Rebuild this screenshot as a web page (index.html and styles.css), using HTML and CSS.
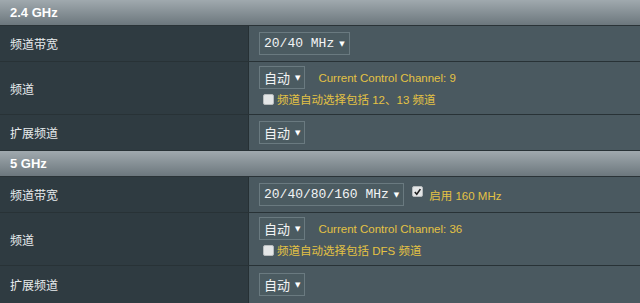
FILE: index.html
```html
<!DOCTYPE html>
<html>
<head>
<meta charset="utf-8">
<link rel="stylesheet" href="styles.css">
</head>
<body>
<div class="panel">
  <div class="hdr">2.4 GHz</div>
  <div class="row">
    <div class="lbl">频道带宽</div>
    <div class="val"><span class="sel mono">20/40 MHz<i class="arr">▼</i></span></div>
  </div>
  <div class="row tall">
    <div class="lbl">频道</div>
    <div class="val stack">
      <div class="line"><span class="sel">自动<i class="arr">▼</i></span><span class="note">Current Control Channel: 9</span></div>
      <div class="line2"><span class="cb"></span><span class="note">频道自动选择包括 12、13 频道</span></div>
    </div>
  </div>
  <div class="row">
    <div class="lbl">扩展频道</div>
    <div class="val"><span class="sel">自动<i class="arr">▼</i></span></div>
  </div>
  <div class="hdr">5 GHz</div>
  <div class="row">
    <div class="lbl">频道带宽</div>
    <div class="val"><span class="sel mono">20/40/80/160 MHz<i class="arr">▼</i></span><span class="cb on"><svg viewBox="0 0 10 10" width="10" height="10"><path d="M2 5 L4.2 7.5 L8.2 1.8" fill="none" stroke="#222" stroke-width="1.8"/></svg></span><span class="note">启用 160 MHz</span></div>
  </div>
  <div class="row tall">
    <div class="lbl">频道</div>
    <div class="val stack">
      <div class="line"><span class="sel">自动<i class="arr">▼</i></span><span class="note">Current Control Channel: 36</span></div>
      <div class="line2"><span class="cb"></span><span class="note">频道自动选择包括 DFS 频道</span></div>
    </div>
  </div>
  <div class="row last">
    <div class="lbl">扩展频道</div>
    <div class="val"><span class="sel">自动<i class="arr">▼</i></span></div>
  </div>
</div>
</body>
</html>
```
FILE: styles.css
```css
html, body { margin: 0; padding: 0; }
body {
  width: 640px; height: 303px; overflow: hidden;
  background: #4a5960;
  font-family: "Liberation Sans", Arial, "Noto Sans CJK SC", sans-serif;
}
.panel { display: flex; flex-direction: column; }
.hdr {
  height: 25px;
  border-bottom: 1px solid #2a3337;
  background: linear-gradient(#a0a9ae, #6c777d);
  color: #fff;
  font-weight: bold;
  font-size: 13px;
  line-height: 25px;
  padding-left: 10px;
}
.row {
  display: grid;
  grid-template-columns: 249px 1fr;
  height: 35px;
  border-bottom: 1px solid #283236;
}
.row.tall { height: 52px; }
.row.last { height: 37px; border-bottom: 0; }
.lbl {
  background: #2f3b41;
  border-right: 1px solid #263034;
  color: #e8ecee;
  font-size: 12px;
  display: flex; align-items: center;
  padding-left: 10px;
}
.val {
  background: #4a5960;
  display: flex; align-items: center;
  padding-left: 10px;
}
.val.stack { flex-direction: column; align-items: flex-start; justify-content: flex-start; padding-top: 4px; }
.line { display: flex; align-items: center; }
.line2 { display: flex; align-items: center; margin-top: 2px; padding-left: 4px; }
.sel {
  box-sizing: border-box;
  height: 23px;
  display: inline-flex; align-items: center;
  border: 1px solid #6a7a80;
  background: #4b5b61;
  color: #f2f4f5;
  font-size: 13px;
  padding: 0 4px 0 4px;
}
.sel.mono { font-family: "Liberation Mono", "Courier New", monospace; font-size: 13px; }
.arr { font-style: normal; font-size: 7px; margin-left: 5px; color: #fff; font-family: "DejaVu Sans", sans-serif; }
.note { color: #e4c244; font-size: 11.5px; margin-left: 13px; }
.line2 .note { margin-left: 3px; }
.cb {
  box-sizing: border-box;
  width: 11px; height: 11px;
  background: #e4e6e7;
  border: 1px solid #b8bcbe;
  border-radius: 2px;
  display: inline-flex; align-items: center; justify-content: center;
}
.cb.on { margin-left: 8px; margin-top: -6px; }
.cb.on + .note { margin-left: 6px; }
```
